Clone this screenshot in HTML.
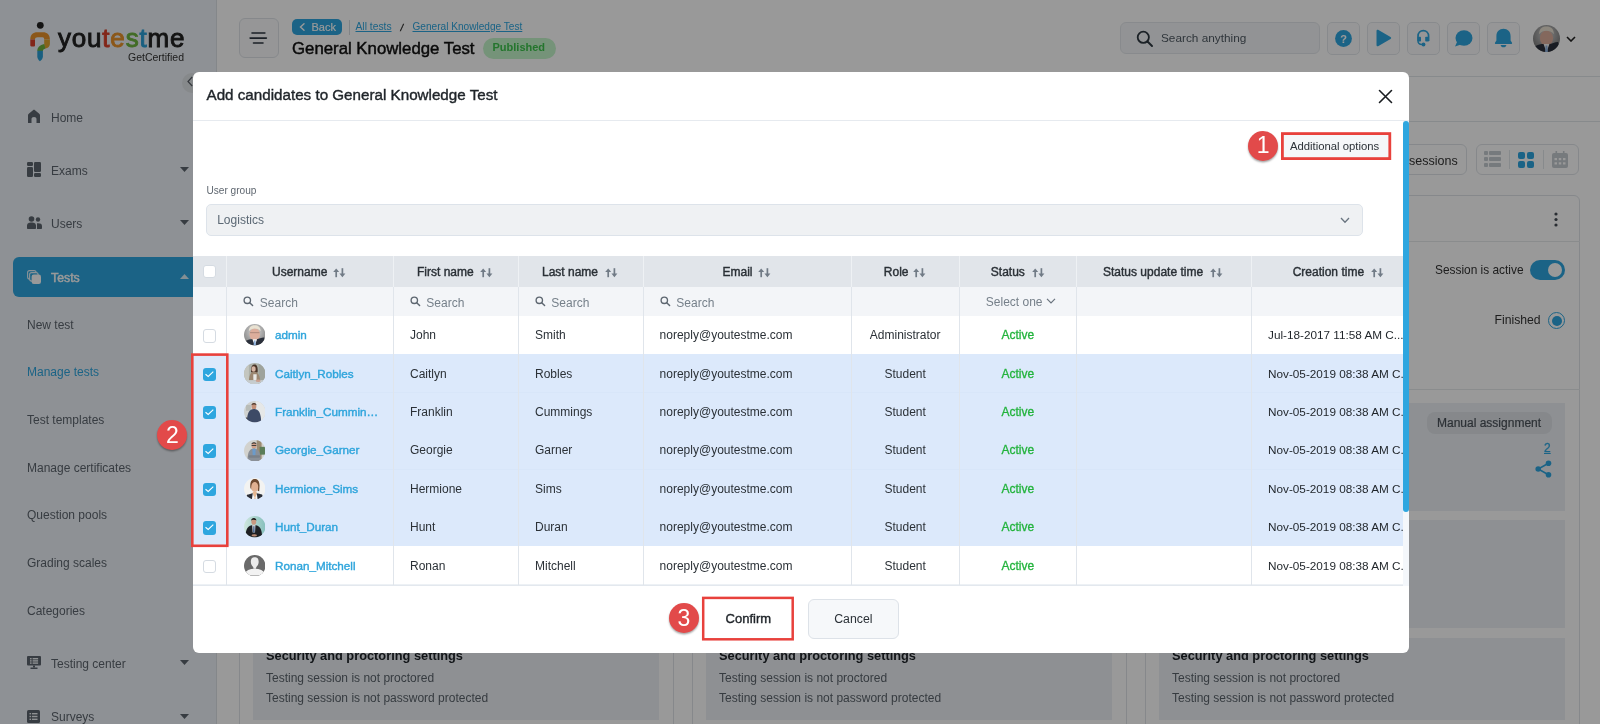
<!DOCTYPE html>
<html><head><meta charset="utf-8"><style>
*{box-sizing:border-box;margin:0;padding:0}
html,body{width:1600px;height:724px;overflow:hidden;background:#fff;font-family:"Liberation Sans", sans-serif;color:#222}
.t{position:absolute;white-space:nowrap}
.a{position:absolute}

#modal{position:absolute;left:192.5px;top:72px;width:1216.5px;height:580.5px;background:#fff;border-radius:6px;overflow:hidden}
#mi{position:absolute;left:-192.5px;top:-72px;width:1600px;height:724px}
.cb{position:absolute;width:13.5px;height:13.5px;border-radius:3px}
.cbu{border:1px solid #d5dbe2;background:#fff}
.cbc{background:#2ea6df}
.ell{overflow:hidden;text-overflow:ellipsis}
</style></head><body>
<div id="root" style="position:absolute;left:0;top:0;width:1600px;height:724px;will-change:transform">
<div class="a" style="left:0;top:0;width:217px;height:724px;background:#edf2f8;border-right:1px solid #dde2e7"></div>
<svg class="a" style="left:28px;top:20px" width="26" height="44" viewBox="0 0 26 44">
<circle cx="12.3" cy="5.3" r="3.4" fill="#222"/>
<path d="M2.3 19.5 C2.3 14.6 5.2 12.3 9.2 12.3 H15 C19 12.3 21.9 14.6 21.9 19.5 L16.2 19.5 C16.2 18 15.6 17.2 14.5 17.2 H9.6 C8 17.2 7 18 7 19.5 Z" fill="#e8922a"/>
<path d="M2.3 19.4 H7 V25.2 C7 26 6.5 26.5 5.6 26.5 H3.4 C2.8 26.5 2.3 26 2.3 25.3 Z" fill="#d9402b"/>
<path d="M16.2 19.4 H21.9 V23.8 C21.9 26.6 20.2 28 17.2 28.6 L16.2 28.7 Z" fill="#dfa52e"/>
<path d="M16.2 23.9 L17.4 28.6 C15.6 29.2 14.9 29.9 14.9 31 L9.3 31 C9.3 27.2 11.8 24.9 16.2 23.9 Z" fill="#6db33f"/>
<path d="M9.3 30.8 H14.9 V36.2 C14.9 38.4 13.6 40 11.9 41.2 C10.3 39.8 9.3 38.2 9.3 36.2 Z" fill="#2b9fd6"/>
</svg>
<div class="t" style="left:58px;top:23px;font-size:26px;line-height:30px;font-weight:400;-webkit-text-stroke:0.9px currentColor;letter-spacing:0.8px;color:#222">you<span style="color:#d9402b">t</span><span style="color:#e8922a">e</span><span style="color:#6db33f">s</span><span style="color:#2b9fd6">t</span>me</div>
<div class="t " style="left:128px;top:49.5px;font-size:10.5px;line-height:14px;color:#333;">GetCertified</div>
<div class="a" style="left:182px;top:72.5px;width:20px;height:20px;border-radius:10px;background:#e0e4e8"></div>
<svg class="a" style="left:186px;top:76px" width="8" height="11" viewBox="0 0 8 11"><path d="M6.2 1 L2 5.5 L6.2 10" stroke="#5a6068" stroke-width="1.2" fill="none"/></svg>
<svg class="a" style="left:27px;top:108.5px" width="14" height="15" viewBox="0 0 14 15"><path d="M1 14 V6.5 C1 5.5 1.5 5 2 4.5 L6 1.2 C6.6 0.7 7.4 0.7 8 1.2 L12 4.5 C12.5 5 13 5.5 13 6.5 V14 H9.5 V10 C9.5 8.8 8.5 8 7 8 C5.5 8 4.5 8.8 4.5 10 V14 Z" fill="#5d656e"/></svg>
<div class="t " style="left:51px;top:107.5px;font-size:12px;line-height:20px;color:#5d656e;">Home</div>
<svg class="a" style="left:27px;top:162px" width="14" height="15" viewBox="0 0 14 15"><rect x="0" y="0" width="6" height="4" rx="1.2" fill="#5d656e"/><rect x="0" y="5" width="6" height="10" rx="1.2" fill="#5d656e"/><rect x="7" y="0" width="7" height="10" rx="1.2" fill="#5d656e"/><rect x="7" y="11" width="7" height="4" rx="1.2" fill="#5d656e"/></svg>
<div class="t " style="left:51px;top:160.5px;font-size:12px;line-height:20px;color:#5d656e;">Exams</div>
<svg class="a" style="left:180px;top:167px" width="9" height="5" viewBox="0 0 9 5"><path d="M0 0 H9 L4.5 5 Z" fill="#5d656e"/></svg>
<svg class="a" style="left:27px;top:216px" width="15" height="13" viewBox="0 0 15 13"><circle cx="4.5" cy="3" r="2.8" fill="#5d656e"/><circle cx="11" cy="3.5" r="2.2" fill="#5d656e"/><path d="M0 10 C0 7 2 6.5 4.5 6.5 C7 6.5 9 7 9 10 V12 C9 12.6 8.6 13 8 13 H1 C0.4 13 0 12.6 0 12 Z" fill="#5d656e"/><path d="M10 7.2 C13 7 15 7.5 15 10 V12 C15 12.6 14.6 13 14 13 H10 Z" fill="#5d656e"/></svg>
<div class="t " style="left:51px;top:214.0px;font-size:12px;line-height:20px;color:#5d656e;">Users</div>
<svg class="a" style="left:180px;top:220px" width="9" height="5" viewBox="0 0 9 5"><path d="M0 0 H9 L4.5 5 Z" fill="#5d656e"/></svg>
<div class="a" style="left:13px;top:256.5px;width:230px;height:40.5px;border-radius:6px;background:#2ea6df"></div>
<svg class="a" style="left:26.5px;top:269.5px" width="15" height="15" viewBox="0 0 15 15"><rect x="0.6" y="0.6" width="8.5" height="8.5" rx="2" fill="#2ea6df" stroke="#e6f4fb" stroke-width="1.1"/><rect x="2.6" y="2.6" width="8.5" height="8.5" rx="2" fill="#2ea6df" stroke="#e6f4fb" stroke-width="1.1"/><rect x="4.6" y="4.6" width="9.4" height="9.4" rx="2.2" fill="#fff"/></svg>
<div class="t " style="left:51px;top:267.6px;font-size:12.3px;line-height:20px;color:#fff;-webkit-text-stroke:0.45px currentColor;">Tests</div>
<svg class="a" style="left:180px;top:274px" width="9" height="5" viewBox="0 0 9 5"><path d="M0 5 H9 L4.5 0 Z" fill="#dbeef7"/></svg>
<div class="t " style="left:27px;top:314.6px;font-size:12px;line-height:20px;color:#5d656e;">New test</div>
<div class="t " style="left:27px;top:362.1px;font-size:12px;line-height:20px;color:#2ea6df;">Manage tests</div>
<div class="t " style="left:27px;top:409.8px;font-size:12px;line-height:20px;color:#5d656e;">Test templates</div>
<div class="t " style="left:27px;top:457.6px;font-size:12px;line-height:20px;color:#5d656e;">Manage certificates</div>
<div class="t " style="left:27px;top:505.1px;font-size:12px;line-height:20px;color:#5d656e;">Question pools</div>
<div class="t " style="left:27px;top:552.6px;font-size:12px;line-height:20px;color:#5d656e;">Grading scales</div>
<div class="t " style="left:27px;top:600.6px;font-size:12px;line-height:20px;color:#5d656e;">Categories</div>
<svg class="a" style="left:27px;top:656px" width="14" height="13" viewBox="0 0 14 13"><rect x="0" y="0" width="14" height="9.5" rx="1" fill="#5d656e"/><rect x="3" y="2" width="1.6" height="1.4" fill="#eef2f6"/><rect x="3" y="4.2" width="1.6" height="1.4" fill="#eef2f6"/><rect x="3" y="6.4" width="1.6" height="1.4" fill="#eef2f6"/><rect x="5.6" y="2" width="5.5" height="1.4" fill="#eef2f6"/><rect x="5.6" y="4.2" width="5.5" height="1.4" fill="#eef2f6"/><rect x="5.6" y="6.4" width="5.5" height="1.4" fill="#eef2f6"/><rect x="6" y="9.5" width="2" height="2" fill="#5d656e"/><rect x="3.5" y="11.5" width="7" height="1.5" fill="#5d656e"/></svg>
<div class="t " style="left:51px;top:654.0px;font-size:12px;line-height:20px;color:#5d656e;">Testing center</div>
<svg class="a" style="left:180px;top:660px" width="9" height="5" viewBox="0 0 9 5"><path d="M0 0 H9 L4.5 5 Z" fill="#5d656e"/></svg>
<svg class="a" style="left:27px;top:710px" width="13" height="13" viewBox="0 0 13 13"><rect x="0" y="0" width="13" height="13" rx="1.5" fill="#5d656e"/><rect x="2.5" y="3" width="1.6" height="1.4" fill="#eef2f6"/><rect x="2.5" y="5.8" width="1.6" height="1.4" fill="#eef2f6"/><rect x="2.5" y="8.6" width="1.6" height="1.4" fill="#eef2f6"/><rect x="5" y="3" width="5.5" height="1.4" fill="#eef2f6"/><rect x="5" y="5.8" width="5.5" height="1.4" fill="#eef2f6"/><rect x="5" y="8.6" width="5.5" height="1.4" fill="#eef2f6"/></svg>
<div class="t " style="left:51px;top:706.5px;font-size:12px;line-height:20px;color:#5d656e;">Surveys</div>
<svg class="a" style="left:180px;top:714px" width="9" height="5" viewBox="0 0 9 5"><path d="M0 0 H9 L4.5 5 Z" fill="#5d656e"/></svg>
<div class="a" style="left:217px;top:76px;width:1383px;height:1px;background:#e2e6ea"></div>
<div class="a" style="left:217px;top:120.5px;width:1383px;height:1px;background:#e2e6ea"></div>
<div class="a" style="left:238.5px;top:18px;width:40px;height:40px;border:1px solid #dfe3e8;border-radius:6px;background:#fafbfc"></div>
<svg class="a" style="left:249px;top:31px" width="19" height="14" viewBox="0 0 19 14"><path d="M3 2 H15.9 M1.1 7.1 H17.4 M4.5 12 H14" stroke="#2d3640" stroke-width="1.6" stroke-linecap="round"/></svg>
<div class="a" style="left:292px;top:19px;width:50px;height:16px;border-radius:5px;background:#2ea6df"></div>
<svg class="a" style="left:298.5px;top:23px" width="6" height="8" viewBox="0 0 6 8"><path d="M5 0.8 L1.5 4 L5 7.2" stroke="#fff" stroke-width="1.4" fill="none" stroke-linecap="round"/></svg>
<div class="t " style="left:311.5px;top:19.8px;font-size:11px;line-height:14px;color:#fff;-webkit-text-stroke:0.15px currentColor;">Back</div>
<div class="a" style="left:348.5px;top:20px;width:1px;height:15px;background:#d5dae0"></div>
<div class="t " style="left:355.5px;top:19.5px;font-size:10.3px;line-height:14px;color:#2ea6df;"><u>All tests</u></div>
<div class="t " style="left:400.5px;top:20.5px;font-size:9.5px;line-height:14px;color:#222;font-style:italic;-webkit-text-stroke:0.3px currentColor;">/</div>
<div class="t " style="left:412.5px;top:19.5px;font-size:10.1px;line-height:14px;color:#2ea6df;"><u>General Knowledge Test</u></div>
<div class="t " style="left:292px;top:38.0px;font-size:16.8px;line-height:22px;color:#111;-webkit-text-stroke:0.45px currentColor;">General Knowledge Test</div>
<div class="a" style="left:483px;top:37.5px;width:73px;height:21px;border-radius:11px;background:#c4f5ca"></div>
<div class="t " style="left:492.5px;top:38.9px;font-size:11px;line-height:16px;color:#3cc44c;font-weight:700;">Published</div>
<div class="a" style="left:1120px;top:22px;width:200px;height:32px;border:1px solid #e3e7eb;border-radius:6px;background:#f4f6f8"></div>
<svg class="a" style="left:1136px;top:30px" width="18" height="18" viewBox="0 0 18 18"><circle cx="7.3" cy="7.3" r="5.6" stroke="#2d3740" stroke-width="1.8" fill="none"/><path d="M11.5 11.5 L16 16" stroke="#2d3740" stroke-width="2" stroke-linecap="round"/></svg>
<div class="t " style="left:1161px;top:29.0px;font-size:11.8px;line-height:18px;color:#4f5963;">Search anything</div>
<div class="a" style="left:1327px;top:22px;width:33px;height:33px;border:1px solid #e3e7eb;border-radius:5px;background:#fafbfc"></div>
<div class="a" style="left:1367px;top:22px;width:33px;height:33px;border:1px solid #e3e7eb;border-radius:5px;background:#fafbfc"></div>
<div class="a" style="left:1407px;top:22px;width:33px;height:33px;border:1px solid #e3e7eb;border-radius:5px;background:#fafbfc"></div>
<div class="a" style="left:1447px;top:22px;width:33px;height:33px;border:1px solid #e3e7eb;border-radius:5px;background:#fafbfc"></div>
<div class="a" style="left:1487px;top:22px;width:33px;height:33px;border:1px solid #e3e7eb;border-radius:5px;background:#fafbfc"></div>
<svg class="a" style="left:1335px;top:30px" width="17" height="17" viewBox="0 0 17 17"><circle cx="8.5" cy="8.5" r="8.4" fill="#2ea6df"/><text x="8.5" y="12.6" font-size="11" font-weight="700" text-anchor="middle" fill="#fff" font-family="Liberation Sans">?</text></svg>
<svg class="a" style="left:1375px;top:29px" width="17" height="18" viewBox="0 0 17 18"><path d="M1.5 2 C1.5 0.8 2.5 0.3 3.5 0.9 L15.5 8 C16.4 8.5 16.4 9.5 15.5 10 L3.5 17.1 C2.5 17.7 1.5 17.2 1.5 16 Z" fill="#2ea6df"/></svg>
<svg class="a" style="left:1416px;top:29px" width="15" height="18" viewBox="0 0 15 18"><path d="M2 12 V7.2 C2 3.6 4.4 1.6 7.3 1.6 C10.2 1.6 12.6 3.6 12.6 7.2 V12" stroke="#2ea6df" stroke-width="1.7" fill="none"/><rect x="1.6" y="7.8" width="3.4" height="4.8" rx="0.8" fill="#2ea6df"/><rect x="9.2" y="7.8" width="3.8" height="4.8" rx="0.8" fill="#2ea6df"/><path d="M2 12 C2 14.2 3.2 15.4 6 15.4" stroke="#2ea6df" stroke-width="1.5" fill="none"/><circle cx="7.5" cy="15.5" r="1.9" fill="#2ea6df"/></svg>
<svg class="a" style="left:1454px;top:30px" width="19" height="17" viewBox="0 0 19 17"><ellipse cx="10" cy="8" rx="8.5" ry="7.8" fill="#2ea6df"/><path d="M1 16.5 L3.5 11 L7 14.5 Z" fill="#2ea6df"/></svg>
<svg class="a" style="left:1494px;top:28px" width="19" height="20" viewBox="0 0 19 20"><path d="M9.5 0.8 C13.6 0.8 16.6 3.6 16.6 8.2 V12.6 L17.9 14.4 C18.4 15.2 18 16 17.1 16 H1.9 C1 16 0.6 15.2 1.1 14.4 L2.4 12.6 V8.2 C2.4 3.6 5.4 0.8 9.5 0.8 Z" fill="#2ea6df"/><path d="M6.6 16.9 H12.4 C12.2 18.4 11 19.3 9.5 19.3 C8 19.3 6.8 18.4 6.6 16.9 Z" fill="#2ea6df"/></svg>
<svg class="a" style="left:1533px;top:25px" width="27" height="27" viewBox="0 0 22 22"><defs><clipPath id="hc"><circle cx="11" cy="11" r="11"/></clipPath><radialGradient id="hg" cx="0.5" cy="0.35" r="0.7"><stop offset="0" stop-color="#d8d8d8"/><stop offset="1" stop-color="#6c6c6c"/></radialGradient></defs><g clip-path="url(#hc)"><rect width="22" height="22" fill="url(#hg)"/><ellipse cx="11" cy="10.6" rx="5.4" ry="6.2" fill="#dcae9c"/><path d="M5 7.5 C5 2.5 8 1.2 11 1.2 C14.5 1.2 17 3 17 7.5 C15.5 5.2 13 4.6 11 4.6 C8.5 4.6 6.5 5.5 5 7.5 Z" fill="#e9e2d2"/><path d="M0 22 L1.5 17.5 C4 15.8 6.5 15.5 9 15.5 L11 21 L13 15.5 C15.5 15.2 18.5 13.5 20.5 13.8 L22 22 Z" fill="#2b303b"/><path d="M8.6 15.5 L11 22 L13.4 15.5 Z" fill="#f2f2f2"/><path d="M10.3 16.8 L11.7 16.8 L12.2 22 L9.8 22 Z" fill="#8fb3e0"/></g></svg>
<svg class="a" style="left:1566px;top:36px" width="10" height="6" viewBox="0 0 10 6"><path d="M1 1 L5 5 L9 1" stroke="#222" stroke-width="1.6" fill="none"/></svg>
<div class="a" style="left:1400px;top:144px;width:67px;height:31px;border:1px solid #dfe3e8;border-radius:6px;background:#fff"></div>
<div class="t " style="left:1409px;top:151.8px;font-size:12.5px;line-height:18px;color:#333;">sessions</div>
<div class="a" style="left:1476px;top:144px;width:103px;height:31px;border:1px solid #dfe3e8;border-radius:6px;background:#fff"></div>
<div class="a" style="left:1509px;top:150px;width:1px;height:19px;background:#e2e6ea"></div>
<div class="a" style="left:1543px;top:150px;width:1px;height:19px;background:#e2e6ea"></div>
<svg class="a" style="left:1484px;top:151px" width="17" height="16" viewBox="0 0 17 16"><rect x="0" y="0" width="4" height="4" rx="1" fill="#c5cbd1"/><rect x="5" y="0" width="12" height="4" rx="1" fill="#c5cbd1"/><rect x="0" y="6" width="4" height="4" rx="1" fill="#c5cbd1"/><rect x="5" y="6" width="12" height="4" rx="1" fill="#c5cbd1"/><rect x="0" y="12" width="4" height="4" rx="1" fill="#c5cbd1"/><rect x="5" y="12" width="12" height="4" rx="1" fill="#c5cbd1"/></svg>
<svg class="a" style="left:1518px;top:152px" width="16" height="16" viewBox="0 0 16 16"><rect x="0" y="0" width="7" height="7" rx="2" fill="#2ea6df"/><rect x="9" y="0" width="7" height="7" rx="2" fill="#2ea6df"/><rect x="0" y="9" width="7" height="7" rx="2" fill="#2ea6df"/><rect x="9" y="9" width="7" height="7" rx="2" fill="#2ea6df"/></svg>
<svg class="a" style="left:1552px;top:151px" width="16" height="17" viewBox="0 0 16 17"><rect x="0" y="2" width="16" height="15" rx="2" fill="#c5cbd1"/><rect x="3.5" y="0" width="1.6" height="4" fill="#c5cbd1"/><rect x="10.9" y="0" width="1.6" height="4" fill="#c5cbd1"/><g fill="#fff"><rect x="2.5" y="7" width="2.5" height="2.2"/><rect x="6.75" y="7" width="2.5" height="2.2"/><rect x="11" y="7" width="2.5" height="2.2"/><rect x="2.5" y="11.3" width="2.5" height="2.2"/><rect x="6.75" y="11.3" width="2.5" height="2.2"/><rect x="11" y="11.3" width="2.5" height="2.2"/></g></svg>
<div class="a" style="left:239px;top:195px;width:435px;height:600px;border:1px solid #dfe3e8;border-radius:6px;background:#fff"></div>
<div class="a" style="left:239px;top:241px;width:435px;height:1px;background:#e6e9ec"></div>
<div class="a" style="left:239px;top:388.5px;width:435px;height:1px;background:#e6e9ec"></div>
<div class="a" style="left:692px;top:195px;width:435px;height:600px;border:1px solid #dfe3e8;border-radius:6px;background:#fff"></div>
<div class="a" style="left:692px;top:241px;width:435px;height:1px;background:#e6e9ec"></div>
<div class="a" style="left:692px;top:388.5px;width:435px;height:1px;background:#e6e9ec"></div>
<div class="a" style="left:1145px;top:195px;width:435px;height:600px;border:1px solid #dfe3e8;border-radius:6px;background:#fff"></div>
<div class="a" style="left:1145px;top:241px;width:435px;height:1px;background:#e6e9ec"></div>
<div class="a" style="left:1145px;top:388.5px;width:435px;height:1px;background:#e6e9ec"></div>
<svg class="a" style="left:1553px;top:212px" width="6" height="15" viewBox="0 0 6 15"><circle cx="3" cy="2" r="1.6" fill="#454c54"/><circle cx="3" cy="7.5" r="1.6" fill="#454c54"/><circle cx="3" cy="13" r="1.6" fill="#454c54"/></svg>
<div class="t " style="left:1435px;top:260.5px;font-size:11.9px;line-height:18px;color:#333;">Session is active</div>
<div class="a" style="left:1530px;top:260px;width:35px;height:20px;border-radius:10px;background:#2ea6df"></div>
<div class="a" style="left:1548px;top:263px;width:14px;height:14px;border-radius:7px;background:#fff"></div>
<div class="t " style="left:1494.5px;top:311.0px;font-size:12.2px;line-height:18px;color:#333;">Finished</div>
<div class="a" style="left:1548px;top:312px;width:17px;height:17px;border-radius:9px;border:1.6px solid #2ea6df;background:#fff"></div>
<div class="a" style="left:1551.5px;top:315.5px;width:10px;height:10px;border-radius:5px;background:#2ea6df"></div>
<div class="a" style="left:253px;top:403px;width:406px;height:108px;background:#edf1f6"></div>
<div class="a" style="left:253px;top:520px;width:406px;height:108px;background:#edf1f6"></div>
<div class="a" style="left:253px;top:638px;width:406px;height:82px;background:#edf1f6"></div>
<div class="t " style="left:266px;top:646.0px;font-size:12.8px;line-height:20px;color:#1e2328;font-weight:700;">Security and proctoring settings</div>
<div class="t " style="left:266px;top:668.0px;font-size:12px;line-height:20px;color:#5b636b;">Testing session is not proctored</div>
<div class="t " style="left:266px;top:688.0px;font-size:12px;line-height:20px;color:#5b636b;">Testing session is not password protected</div>
<div class="a" style="left:706px;top:403px;width:406px;height:108px;background:#edf1f6"></div>
<div class="a" style="left:706px;top:520px;width:406px;height:108px;background:#edf1f6"></div>
<div class="a" style="left:706px;top:638px;width:406px;height:82px;background:#edf1f6"></div>
<div class="t " style="left:719px;top:646.0px;font-size:12.8px;line-height:20px;color:#1e2328;font-weight:700;">Security and proctoring settings</div>
<div class="t " style="left:719px;top:668.0px;font-size:12px;line-height:20px;color:#5b636b;">Testing session is not proctored</div>
<div class="t " style="left:719px;top:688.0px;font-size:12px;line-height:20px;color:#5b636b;">Testing session is not password protected</div>
<div class="a" style="left:1159px;top:403px;width:406px;height:108px;background:#edf1f6"></div>
<div class="a" style="left:1159px;top:520px;width:406px;height:108px;background:#edf1f6"></div>
<div class="a" style="left:1159px;top:638px;width:406px;height:82px;background:#edf1f6"></div>
<div class="t " style="left:1172px;top:646.0px;font-size:12.8px;line-height:20px;color:#1e2328;font-weight:700;">Security and proctoring settings</div>
<div class="t " style="left:1172px;top:668.0px;font-size:12px;line-height:20px;color:#5b636b;">Testing session is not proctored</div>
<div class="t " style="left:1172px;top:688.0px;font-size:12px;line-height:20px;color:#5b636b;">Testing session is not password protected</div>
<div class="a" style="left:1427px;top:412px;width:125px;height:22px;border-radius:8px;background:#dfe3e8"></div>
<div class="t " style="left:1437px;top:413.0px;font-size:12px;line-height:20px;color:#4a5159;-webkit-text-stroke:0.2px currentColor;">Manual assignment</div>
<div class="t " style="left:1544px;top:438.0px;font-size:12px;line-height:20px;color:#2ea6df;-webkit-text-stroke:0.3px currentColor;"><u>2</u></div>
<svg class="a" style="left:1535px;top:460px" width="17" height="18" viewBox="0 0 17 18"><circle cx="13.5" cy="3.2" r="2.8" fill="#2ea6df"/><circle cx="3.2" cy="9" r="2.8" fill="#2ea6df"/><circle cx="13.5" cy="14.8" r="2.8" fill="#2ea6df"/><path d="M13.5 3.2 L3.2 9 L13.5 14.8" stroke="#2ea6df" stroke-width="1.6" fill="none"/></svg>
<div class="a" style="left:0;top:0;width:1600px;height:724px;background:rgba(0,0,0,0.4)"></div>
<div id="modal"><div id="mi">
<div class="t " style="left:206.5px;top:84.2px;font-size:15.2px;line-height:22px;color:#1f2429;-webkit-text-stroke:0.4px currentColor;">Add candidates to General Knowledge Test</div>
<div class="a" style="left:193px;top:120px;width:1216px;height:1px;background:#e6eaef"></div>
<svg class="a" style="left:1378px;top:89px" width="15" height="15" viewBox="0 0 15 15"><path d="M1.5 1.5 L13.5 13.5 M13.5 1.5 L1.5 13.5" stroke="#1a1d21" stroke-width="1.6" stroke-linecap="round"/></svg>
<div class="a" style="left:1282px;top:133px;width:108px;height:26px;background:#f5f7f9;border:1px solid #dde2e8;border-radius:4px"></div>
<div class="t " style="left:1290px;top:138.3px;font-size:11.3px;line-height:16px;color:#2c3238;">Additional options</div>
<div class="t " style="left:206.5px;top:184.2px;font-size:10.1px;line-height:14px;color:#5f6770;">User group</div>
<div class="a" style="left:206px;top:204px;width:1156.5px;height:32px;background:#eff1f3;border:1px solid #dde3ea;border-radius:5px"></div>
<div class="t " style="left:217.2px;top:211.4px;font-size:12px;line-height:18px;color:#5b6874;">Logistics</div>
<svg class="a" style="left:1340px;top:216.5px" width="10" height="7" viewBox="0 0 10 7"><path d="M1 1 L5 5.3 L9 1" stroke="#6a7580" stroke-width="1.3" fill="none"/></svg>
<div class="a" style="left:193px;top:256px;width:1210px;height:30.5px;background:#e1e5ea"></div>
<div class="a" style="left:193px;top:286.5px;width:1210px;height:29.5px;background:#f3f5f8"></div>
<div class="t " style="left:272px;top:262.9px;font-size:12px;line-height:18px;color:#2a3036;-webkit-text-stroke:0.4px currentColor;">Username</div>
<svg class="a" style="left:332.8px;top:267.7px" width="13" height="10" viewBox="0 0 13 10"><path d="M3.2 9.2 V3" stroke="#717b86" stroke-width="1.7"/><path d="M0.2 4 L3.2 0.4 L6.2 4 Z" fill="#717b86"/><path d="M9.4 0.2 V6.4" stroke="#717b86" stroke-width="1.7"/><path d="M6.4 5.6 L9.4 9.2 L12.4 5.6 Z" fill="#717b86"/></svg>
<div class="t " style="left:417px;top:262.9px;font-size:12px;line-height:18px;color:#2a3036;-webkit-text-stroke:0.4px currentColor;">First name</div>
<svg class="a" style="left:480px;top:267.7px" width="13" height="10" viewBox="0 0 13 10"><path d="M3.2 9.2 V3" stroke="#717b86" stroke-width="1.7"/><path d="M0.2 4 L3.2 0.4 L6.2 4 Z" fill="#717b86"/><path d="M9.4 0.2 V6.4" stroke="#717b86" stroke-width="1.7"/><path d="M6.4 5.6 L9.4 9.2 L12.4 5.6 Z" fill="#717b86"/></svg>
<div class="t " style="left:542px;top:262.9px;font-size:12px;line-height:18px;color:#2a3036;-webkit-text-stroke:0.4px currentColor;">Last name</div>
<svg class="a" style="left:604.5px;top:267.7px" width="13" height="10" viewBox="0 0 13 10"><path d="M3.2 9.2 V3" stroke="#717b86" stroke-width="1.7"/><path d="M0.2 4 L3.2 0.4 L6.2 4 Z" fill="#717b86"/><path d="M9.4 0.2 V6.4" stroke="#717b86" stroke-width="1.7"/><path d="M6.4 5.6 L9.4 9.2 L12.4 5.6 Z" fill="#717b86"/></svg>
<div class="t " style="left:722.5px;top:262.9px;font-size:12px;line-height:18px;color:#2a3036;-webkit-text-stroke:0.4px currentColor;">Email</div>
<svg class="a" style="left:758px;top:267.7px" width="13" height="10" viewBox="0 0 13 10"><path d="M3.2 9.2 V3" stroke="#717b86" stroke-width="1.7"/><path d="M0.2 4 L3.2 0.4 L6.2 4 Z" fill="#717b86"/><path d="M9.4 0.2 V6.4" stroke="#717b86" stroke-width="1.7"/><path d="M6.4 5.6 L9.4 9.2 L12.4 5.6 Z" fill="#717b86"/></svg>
<div class="t " style="left:883.8px;top:262.9px;font-size:12px;line-height:18px;color:#2a3036;-webkit-text-stroke:0.4px currentColor;">Role</div>
<svg class="a" style="left:913.3px;top:267.7px" width="13" height="10" viewBox="0 0 13 10"><path d="M3.2 9.2 V3" stroke="#717b86" stroke-width="1.7"/><path d="M0.2 4 L3.2 0.4 L6.2 4 Z" fill="#717b86"/><path d="M9.4 0.2 V6.4" stroke="#717b86" stroke-width="1.7"/><path d="M6.4 5.6 L9.4 9.2 L12.4 5.6 Z" fill="#717b86"/></svg>
<div class="t " style="left:990.8px;top:262.9px;font-size:12px;line-height:18px;color:#2a3036;-webkit-text-stroke:0.4px currentColor;">Status</div>
<svg class="a" style="left:1031.5px;top:267.7px" width="13" height="10" viewBox="0 0 13 10"><path d="M3.2 9.2 V3" stroke="#717b86" stroke-width="1.7"/><path d="M0.2 4 L3.2 0.4 L6.2 4 Z" fill="#717b86"/><path d="M9.4 0.2 V6.4" stroke="#717b86" stroke-width="1.7"/><path d="M6.4 5.6 L9.4 9.2 L12.4 5.6 Z" fill="#717b86"/></svg>
<div class="t " style="left:1103px;top:262.9px;font-size:12px;line-height:18px;color:#2a3036;-webkit-text-stroke:0.4px currentColor;">Status update time</div>
<svg class="a" style="left:1210px;top:267.7px" width="13" height="10" viewBox="0 0 13 10"><path d="M3.2 9.2 V3" stroke="#717b86" stroke-width="1.7"/><path d="M0.2 4 L3.2 0.4 L6.2 4 Z" fill="#717b86"/><path d="M9.4 0.2 V6.4" stroke="#717b86" stroke-width="1.7"/><path d="M6.4 5.6 L9.4 9.2 L12.4 5.6 Z" fill="#717b86"/></svg>
<div class="t " style="left:1292.7px;top:262.9px;font-size:12px;line-height:18px;color:#2a3036;-webkit-text-stroke:0.4px currentColor;">Creation time</div>
<svg class="a" style="left:1370.6px;top:267.7px" width="13" height="10" viewBox="0 0 13 10"><path d="M3.2 9.2 V3" stroke="#717b86" stroke-width="1.7"/><path d="M0.2 4 L3.2 0.4 L6.2 4 Z" fill="#717b86"/><path d="M9.4 0.2 V6.4" stroke="#717b86" stroke-width="1.7"/><path d="M6.4 5.6 L9.4 9.2 L12.4 5.6 Z" fill="#717b86"/></svg>
<div class="cb cbu" style="left:202.8px;top:264.6px"></div>
<svg class="a" style="left:243.1px;top:295.6px" width="11" height="11" viewBox="0 0 11 11"><circle cx="4.3" cy="4.3" r="3.2" stroke="#5d6670" stroke-width="1.35" fill="none"/><path d="M6.7 6.7 L9.6 9.6" stroke="#5d6670" stroke-width="1.45" stroke-linecap="round"/></svg>
<div class="t " style="left:259.8px;top:294.0px;font-size:12px;line-height:18px;color:#76808a;">Search</div>
<svg class="a" style="left:409.6px;top:295.6px" width="11" height="11" viewBox="0 0 11 11"><circle cx="4.3" cy="4.3" r="3.2" stroke="#5d6670" stroke-width="1.35" fill="none"/><path d="M6.7 6.7 L9.6 9.6" stroke="#5d6670" stroke-width="1.45" stroke-linecap="round"/></svg>
<div class="t " style="left:426.3px;top:294.0px;font-size:12px;line-height:18px;color:#76808a;">Search</div>
<svg class="a" style="left:534.6px;top:295.6px" width="11" height="11" viewBox="0 0 11 11"><circle cx="4.3" cy="4.3" r="3.2" stroke="#5d6670" stroke-width="1.35" fill="none"/><path d="M6.7 6.7 L9.6 9.6" stroke="#5d6670" stroke-width="1.45" stroke-linecap="round"/></svg>
<div class="t " style="left:551.3px;top:294.0px;font-size:12px;line-height:18px;color:#76808a;">Search</div>
<svg class="a" style="left:659.6px;top:295.6px" width="11" height="11" viewBox="0 0 11 11"><circle cx="4.3" cy="4.3" r="3.2" stroke="#5d6670" stroke-width="1.35" fill="none"/><path d="M6.7 6.7 L9.6 9.6" stroke="#5d6670" stroke-width="1.45" stroke-linecap="round"/></svg>
<div class="t " style="left:676.3px;top:294.0px;font-size:12px;line-height:18px;color:#76808a;">Search</div>
<div class="t " style="left:985.8px;top:292.6px;font-size:12px;line-height:18px;color:#76808a;">Select one</div>
<svg class="a" style="left:1046px;top:298px" width="10" height="6" viewBox="0 0 10 6"><path d="M1 0.8 L5 4.8 L9 0.8" stroke="#69737d" stroke-width="1.2" fill="none"/></svg>
<div class="a" style="left:193px;top:316.0px;width:1210px;height:38.4px;background:#fff"></div>
<div class="a" style="left:193px;top:353.9px;width:1210px;height:1px;background:#edf1f5"></div>
<div class="cb cbu" style="left:202.6px;top:329.1px"></div>
<svg class="a" style="left:243.6px;top:324.3px" width="21.5" height="21.5" viewBox="0 0 22 22"><defs><clipPath id="avadmin"><circle cx="11" cy="11" r="11"/></clipPath></defs><g clip-path="url(#avadmin)"><radialGradient id="gavadmin" cx="0.5" cy="0.35" r="0.7"><stop offset="0" stop-color="#d8d8d8"/><stop offset="1" stop-color="#7c7c7c"/></radialGradient><rect width="22" height="22" fill="url(#gavadmin)"/><ellipse cx="11" cy="10.6" rx="5.4" ry="6.2" fill="#dcae9c"/><path d="M5 7.5 C5 2.5 8 1.2 11 1.2 C14.5 1.2 17 3 17 7.5 C15.5 5.2 13 4.6 11 4.6 C8.5 4.6 6.5 5.5 5 7.5 Z" fill="#e9e2d2"/><rect x="6.2" y="8.2" width="9.6" height="1.2" fill="#9a7a70" opacity="0.6"/><path d="M0 22 L1.5 17.5 C4 15.8 6.5 15.5 9 15.5 L11 21 L13 15.5 C15.5 15.2 18.5 13.5 20.5 13.8 L22 22 Z" fill="#2b303b"/><path d="M8.6 15.5 L11 22 L13.4 15.5 Z" fill="#f2f2f2"/><path d="M10.3 16.8 L11.7 16.8 L12.2 22 L9.8 22 Z" fill="#8fb3e0"/></g></svg>
<div class="t" style="left:275px;top:325.2px;font-size:11.7px;line-height:20px;color:#2fa5dc;-webkit-text-stroke:0.4px currentColor">admin</div>
<div class="t " style="left:410px;top:325.2px;font-size:12px;line-height:20px;color:#2b3137;">John</div>
<div class="t " style="left:535px;top:325.2px;font-size:12px;line-height:20px;color:#2b3137;">Smith</div>
<div class="t " style="left:659.6px;top:325.2px;font-size:12px;line-height:20px;color:#2b3137;">noreply@youtestme.com</div>
<div class="t" style="left:852.2px;width:106px;text-align:center;top:325.2px;font-size:12px;line-height:20px;color:#2b3137;">Administrator</div>
<div class="t" style="left:962.8px;width:110px;text-align:center;top:325.2px;font-size:12px;line-height:20px;color:#22b33c;-webkit-text-stroke:0.3px currentColor;">Active</div>
<div class="t" style="left:1268px;top:325.2px;width:135px;overflow:hidden;font-size:11.75px;line-height:20px;color:#1f2429">Jul-18-2017 11:58 AM C...</div>
<div class="a" style="left:193px;top:354.4px;width:1210px;height:38.4px;background:#dce9fb"></div>
<div class="a" style="left:193px;top:392.3px;width:1210px;height:1px;background:#d8e6f9"></div>
<div class="cb cbc" style="left:202.6px;top:367.5px"></div>
<svg class="a" style="left:205px;top:369.7px" width="9" height="8" viewBox="0 0 9 8"><path d="M0.5 4.2 L3.2 6.4 L8.3 1.6" stroke="#fff" stroke-width="1.1" fill="none"/></svg>
<svg class="a" style="left:243.6px;top:362.7px" width="21.5" height="21.5" viewBox="0 0 22 22"><defs><clipPath id="avcaitlyn"><circle cx="11" cy="11" r="11"/></clipPath></defs><g clip-path="url(#avcaitlyn)"><rect width="22" height="22" fill="#aeb2aa"/><rect x="0" y="0" width="5" height="22" fill="#c4c6bf"/><rect x="15" y="0" width="7" height="22" fill="#9ea39c"/><path d="M7.2 8.5 C6.8 3 9 1.5 10.8 1.5 C13 1.5 14.2 3.5 14 9 L13.5 10 L8 10 Z" fill="#4a3428"/><ellipse cx="9.8" cy="6.2" rx="2.2" ry="2.8" fill="#d6b4a2"/><path d="M5 18.5 C5.5 11 7.5 9 10.5 9 C13.5 9 16 11 16.5 18.5 Z" fill="#9b8670"/><path d="M9.5 11.5 L13 11.5 L12.8 17.5 L9.6 17.5 Z" fill="#e8e8e6"/><rect x="0" y="17.5" width="22" height="5" fill="#c6ccce"/><ellipse cx="14.5" cy="18.2" rx="2.5" ry="1.2" fill="#c9a090"/></g></svg>
<div class="t" style="left:275px;top:363.6px;font-size:11.7px;line-height:20px;color:#2fa5dc;-webkit-text-stroke:0.4px currentColor">Caitlyn_Robles</div>
<div class="t " style="left:410px;top:363.6px;font-size:12px;line-height:20px;color:#2b3137;">Caitlyn</div>
<div class="t " style="left:535px;top:363.6px;font-size:12px;line-height:20px;color:#2b3137;">Robles</div>
<div class="t " style="left:659.6px;top:363.6px;font-size:12px;line-height:20px;color:#2b3137;">noreply@youtestme.com</div>
<div class="t" style="left:852.2px;width:106px;text-align:center;top:363.6px;font-size:12px;line-height:20px;color:#2b3137;">Student</div>
<div class="t" style="left:962.8px;width:110px;text-align:center;top:363.6px;font-size:12px;line-height:20px;color:#22b33c;-webkit-text-stroke:0.3px currentColor;">Active</div>
<div class="t" style="left:1268px;top:363.6px;width:135px;overflow:hidden;font-size:11.75px;line-height:20px;color:#1f2429">Nov-05-2019 08:38 AM C..</div>
<div class="a" style="left:193px;top:392.8px;width:1210px;height:38.4px;background:#dce9fb"></div>
<div class="a" style="left:193px;top:430.7px;width:1210px;height:1px;background:#d8e6f9"></div>
<div class="cb cbc" style="left:202.6px;top:405.9px"></div>
<svg class="a" style="left:205px;top:408.1px" width="9" height="8" viewBox="0 0 9 8"><path d="M0.5 4.2 L3.2 6.4 L8.3 1.6" stroke="#fff" stroke-width="1.1" fill="none"/></svg>
<svg class="a" style="left:243.6px;top:401.1px" width="21.5" height="21.5" viewBox="0 0 22 22"><defs><clipPath id="avfranklin"><circle cx="11" cy="11" r="11"/></clipPath></defs><g clip-path="url(#avfranklin)"><rect width="22" height="22" fill="#d0d2d0"/><rect x="12" y="0" width="10" height="22" fill="#e6e8e8"/><rect x="2" y="4" width="5" height="6" fill="#b8bcb8"/><ellipse cx="10.2" cy="5.6" rx="2.4" ry="3" fill="#c39078"/><path d="M7.6 4.5 C7.6 1.2 12.8 1.2 12.8 4.5 C12 3.2 8.5 3.2 7.6 4.5 Z" fill="#4b3426"/><path d="M3 22 C3 12 5.5 8.2 10.2 8.2 C15 8.2 17.5 12 17.5 22 Z" fill="#3d4a66"/><rect x="1.5" y="17" width="1.8" height="2" fill="#111"/></g></svg>
<div class="t" style="left:275px;top:402.0px;font-size:11.7px;line-height:20px;color:#2fa5dc;-webkit-text-stroke:0.4px currentColor">Franklin_Cummin…</div>
<div class="t " style="left:410px;top:402.0px;font-size:12px;line-height:20px;color:#2b3137;">Franklin</div>
<div class="t " style="left:535px;top:402.0px;font-size:12px;line-height:20px;color:#2b3137;">Cummings</div>
<div class="t " style="left:659.6px;top:402.0px;font-size:12px;line-height:20px;color:#2b3137;">noreply@youtestme.com</div>
<div class="t" style="left:852.2px;width:106px;text-align:center;top:402.0px;font-size:12px;line-height:20px;color:#2b3137;">Student</div>
<div class="t" style="left:962.8px;width:110px;text-align:center;top:402.0px;font-size:12px;line-height:20px;color:#22b33c;-webkit-text-stroke:0.3px currentColor;">Active</div>
<div class="t" style="left:1268px;top:402.0px;width:135px;overflow:hidden;font-size:11.75px;line-height:20px;color:#1f2429">Nov-05-2019 08:38 AM C..</div>
<div class="a" style="left:193px;top:431.2px;width:1210px;height:38.4px;background:#dce9fb"></div>
<div class="a" style="left:193px;top:469.1px;width:1210px;height:1px;background:#d8e6f9"></div>
<div class="cb cbc" style="left:202.6px;top:444.3px"></div>
<svg class="a" style="left:205px;top:446.5px" width="9" height="8" viewBox="0 0 9 8"><path d="M0.5 4.2 L3.2 6.4 L8.3 1.6" stroke="#fff" stroke-width="1.1" fill="none"/></svg>
<svg class="a" style="left:243.6px;top:439.5px" width="21.5" height="21.5" viewBox="0 0 22 22"><defs><clipPath id="avgeorgie"><circle cx="11" cy="11" r="11"/></clipPath></defs><g clip-path="url(#avgeorgie)"><rect width="22" height="22" fill="#d2d2ce"/><rect x="13" y="0" width="5" height="22" fill="#9c8b72"/><rect x="16" y="7" width="6" height="8" fill="#5b7d58"/><ellipse cx="10.2" cy="5.8" rx="2.5" ry="3.1" fill="#cf9f88"/><path d="M7.6 4.6 C7.6 1.4 12.8 1.4 12.8 4.6 C12 3.4 8.5 3.4 7.6 4.6 Z" fill="#2e2a26"/><rect x="7.8" y="5.2" width="4.8" height="0.9" fill="#333"/><path d="M3.5 22 C3.5 12 6 8.8 10.2 8.8 C14.5 8.8 17 12 17 22 Z" fill="#8a9098"/><path d="M8.5 8.9 L12 8.9 L11.6 16 L8.9 16 Z" fill="#6b9bcb"/><rect x="4.5" y="15.5" width="12" height="2.6" rx="1.2" fill="#7a8088"/></g></svg>
<div class="t" style="left:275px;top:440.4px;font-size:11.7px;line-height:20px;color:#2fa5dc;-webkit-text-stroke:0.4px currentColor">Georgie_Garner</div>
<div class="t " style="left:410px;top:440.4px;font-size:12px;line-height:20px;color:#2b3137;">Georgie</div>
<div class="t " style="left:535px;top:440.4px;font-size:12px;line-height:20px;color:#2b3137;">Garner</div>
<div class="t " style="left:659.6px;top:440.4px;font-size:12px;line-height:20px;color:#2b3137;">noreply@youtestme.com</div>
<div class="t" style="left:852.2px;width:106px;text-align:center;top:440.4px;font-size:12px;line-height:20px;color:#2b3137;">Student</div>
<div class="t" style="left:962.8px;width:110px;text-align:center;top:440.4px;font-size:12px;line-height:20px;color:#22b33c;-webkit-text-stroke:0.3px currentColor;">Active</div>
<div class="t" style="left:1268px;top:440.4px;width:135px;overflow:hidden;font-size:11.75px;line-height:20px;color:#1f2429">Nov-05-2019 08:38 AM C..</div>
<div class="a" style="left:193px;top:469.6px;width:1210px;height:38.4px;background:#dce9fb"></div>
<div class="a" style="left:193px;top:507.5px;width:1210px;height:1px;background:#d8e6f9"></div>
<div class="cb cbc" style="left:202.6px;top:482.7px"></div>
<svg class="a" style="left:205px;top:484.9px" width="9" height="8" viewBox="0 0 9 8"><path d="M0.5 4.2 L3.2 6.4 L8.3 1.6" stroke="#fff" stroke-width="1.1" fill="none"/></svg>
<svg class="a" style="left:243.6px;top:477.9px" width="21.5" height="21.5" viewBox="0 0 22 22"><defs><clipPath id="avhermione"><circle cx="11" cy="11" r="11"/></clipPath></defs><g clip-path="url(#avhermione)"><rect width="22" height="22" fill="#f3f3f1"/><path d="M6.5 10 C5.8 3 8.5 1 11 1 C14 1 16.5 3 15.8 10 L15.5 13.5 L14 13 L14 9 L8 9 L7.5 12 Z" fill="#6e4a30"/><ellipse cx="11" cy="9.2" rx="3.6" ry="5" fill="#e0b090"/><path d="M7.5 5.5 C8.5 3.5 13.5 3.5 14.5 5.5 L14.5 4 C13 2 9 2 7.5 4 Z" fill="#6e4a30"/><path d="M9 14 L13 14 L13.5 22 L8.5 22 Z" fill="#e8b890"/><path d="M1.5 22 L3 17.2 C5 16.5 7.5 16 9 15.5 L10.5 22 Z" fill="#2b2e36"/><path d="M20.5 22 L18.5 16.8 C17 16.3 14.5 15.8 13 15.5 L12 22 Z" fill="#2b2e36"/><path d="M9 15.5 L11 20.5 L9.8 22 L8 22 Z" fill="#f5f5f5"/><path d="M13 15.5 L11.5 20.5 L12.2 22 L14 22 Z" fill="#f5f5f5"/></g></svg>
<div class="t" style="left:275px;top:478.8px;font-size:11.7px;line-height:20px;color:#2fa5dc;-webkit-text-stroke:0.4px currentColor">Hermione_Sims</div>
<div class="t " style="left:410px;top:478.8px;font-size:12px;line-height:20px;color:#2b3137;">Hermione</div>
<div class="t " style="left:535px;top:478.8px;font-size:12px;line-height:20px;color:#2b3137;">Sims</div>
<div class="t " style="left:659.6px;top:478.8px;font-size:12px;line-height:20px;color:#2b3137;">noreply@youtestme.com</div>
<div class="t" style="left:852.2px;width:106px;text-align:center;top:478.8px;font-size:12px;line-height:20px;color:#2b3137;">Student</div>
<div class="t" style="left:962.8px;width:110px;text-align:center;top:478.8px;font-size:12px;line-height:20px;color:#22b33c;-webkit-text-stroke:0.3px currentColor;">Active</div>
<div class="t" style="left:1268px;top:478.8px;width:135px;overflow:hidden;font-size:11.75px;line-height:20px;color:#1f2429">Nov-05-2019 08:38 AM C..</div>
<div class="a" style="left:193px;top:508.0px;width:1210px;height:38.4px;background:#dce9fb"></div>
<div class="a" style="left:193px;top:545.9px;width:1210px;height:1px;background:#d8e6f9"></div>
<div class="cb cbc" style="left:202.6px;top:521.1px"></div>
<svg class="a" style="left:205px;top:523.3px" width="9" height="8" viewBox="0 0 9 8"><path d="M0.5 4.2 L3.2 6.4 L8.3 1.6" stroke="#fff" stroke-width="1.1" fill="none"/></svg>
<svg class="a" style="left:243.6px;top:516.3px" width="21.5" height="21.5" viewBox="0 0 22 22"><defs><clipPath id="avhunt"><circle cx="11" cy="11" r="11"/></clipPath></defs><g clip-path="url(#avhunt)"><linearGradient id="gavhunt" x1="0" y1="0" x2="1" y2="0"><stop offset="0" stop-color="#cfe6de"/><stop offset="1" stop-color="#86c0bc"/></linearGradient><rect width="22" height="22" fill="url(#gavhunt)"/><ellipse cx="10" cy="5.8" rx="2.5" ry="3.2" fill="#c89880"/><path d="M7.3 4.8 C7.3 1.2 12.7 1.2 12.7 4.8 C11.8 3.4 8.2 3.4 7.3 4.8 Z" fill="#1a1a1a"/><path d="M1.5 22 C1.5 13 4 9.2 10 9.2 C16 9.2 18.5 13 18.5 22 Z" fill="#1e2024"/><path d="M8.3 9.2 L11.8 9.2 L11.3 17 L8.8 17 Z" fill="#c8ccd0"/><path d="M9.6 10.5 L10.6 10.5 L10.9 16.5 L9.3 16.5 Z" fill="#3a5a8a"/><ellipse cx="10.5" cy="19.8" rx="2.8" ry="1.2" fill="#b88a72"/></g></svg>
<div class="t" style="left:275px;top:517.2px;font-size:11.7px;line-height:20px;color:#2fa5dc;-webkit-text-stroke:0.4px currentColor">Hunt_Duran</div>
<div class="t " style="left:410px;top:517.2px;font-size:12px;line-height:20px;color:#2b3137;">Hunt</div>
<div class="t " style="left:535px;top:517.2px;font-size:12px;line-height:20px;color:#2b3137;">Duran</div>
<div class="t " style="left:659.6px;top:517.2px;font-size:12px;line-height:20px;color:#2b3137;">noreply@youtestme.com</div>
<div class="t" style="left:852.2px;width:106px;text-align:center;top:517.2px;font-size:12px;line-height:20px;color:#2b3137;">Student</div>
<div class="t" style="left:962.8px;width:110px;text-align:center;top:517.2px;font-size:12px;line-height:20px;color:#22b33c;-webkit-text-stroke:0.3px currentColor;">Active</div>
<div class="t" style="left:1268px;top:517.2px;width:135px;overflow:hidden;font-size:11.75px;line-height:20px;color:#1f2429">Nov-05-2019 08:38 AM C..</div>
<div class="a" style="left:193px;top:546.4px;width:1210px;height:38.4px;background:#fff"></div>
<div class="a" style="left:193px;top:584.3px;width:1210px;height:1px;background:#edf1f5"></div>
<div class="cb cbu" style="left:202.6px;top:559.5px"></div>
<svg class="a" style="left:243.6px;top:554.7px" width="21.5" height="21.5" viewBox="0 0 22 22"><defs><clipPath id="avdefault"><circle cx="11" cy="11" r="11"/></clipPath></defs><g clip-path="url(#avdefault)"><rect width="22" height="22" fill="#6a6a6a"/><path d="M7 7.5 C6.8 3.5 8.5 2.2 11 2.2 C13.5 2.2 15.2 3.5 15 7.5 C14.8 10 13.5 11.5 12.5 12.5 L12.3 14 L9.7 14 L9.5 12.5 C8.5 11.5 7.2 10 7 7.5 Z" fill="#ececec"/><ellipse cx="11" cy="18.5" rx="9.5" ry="4.5" fill="#f2f2f2"/><rect x="6" y="20.8" width="10" height="1.2" fill="#9a9a9a"/></g></svg>
<div class="t" style="left:275px;top:555.6px;font-size:11.7px;line-height:20px;color:#2fa5dc;-webkit-text-stroke:0.4px currentColor">Ronan_Mitchell</div>
<div class="t " style="left:410px;top:555.6px;font-size:12px;line-height:20px;color:#2b3137;">Ronan</div>
<div class="t " style="left:535px;top:555.6px;font-size:12px;line-height:20px;color:#2b3137;">Mitchell</div>
<div class="t " style="left:659.6px;top:555.6px;font-size:12px;line-height:20px;color:#2b3137;">noreply@youtestme.com</div>
<div class="t" style="left:852.2px;width:106px;text-align:center;top:555.6px;font-size:12px;line-height:20px;color:#2b3137;">Student</div>
<div class="t" style="left:962.8px;width:110px;text-align:center;top:555.6px;font-size:12px;line-height:20px;color:#22b33c;-webkit-text-stroke:0.3px currentColor;">Active</div>
<div class="t" style="left:1268px;top:555.6px;width:135px;overflow:hidden;font-size:11.75px;line-height:20px;color:#1f2429">Nov-05-2019 08:38 AM C..</div>
<div class="a" style="left:226.0px;top:256px;width:1px;height:30.5px;background:#eef1f4"></div>
<div class="a" style="left:226.0px;top:286.5px;width:1px;height:298.5px;background:#e0e5eb"></div>
<div class="a" style="left:392.5px;top:256px;width:1px;height:30.5px;background:#eef1f4"></div>
<div class="a" style="left:392.5px;top:286.5px;width:1px;height:298.5px;background:#e0e5eb"></div>
<div class="a" style="left:517.5px;top:256px;width:1px;height:30.5px;background:#eef1f4"></div>
<div class="a" style="left:517.5px;top:286.5px;width:1px;height:298.5px;background:#e0e5eb"></div>
<div class="a" style="left:642.5px;top:256px;width:1px;height:30.5px;background:#eef1f4"></div>
<div class="a" style="left:642.5px;top:286.5px;width:1px;height:298.5px;background:#e0e5eb"></div>
<div class="a" style="left:850.5px;top:256px;width:1px;height:30.5px;background:#eef1f4"></div>
<div class="a" style="left:850.5px;top:286.5px;width:1px;height:298.5px;background:#e0e5eb"></div>
<div class="a" style="left:959.0px;top:256px;width:1px;height:30.5px;background:#eef1f4"></div>
<div class="a" style="left:959.0px;top:286.5px;width:1px;height:298.5px;background:#e0e5eb"></div>
<div class="a" style="left:1076.0px;top:256px;width:1px;height:30.5px;background:#eef1f4"></div>
<div class="a" style="left:1076.0px;top:286.5px;width:1px;height:298.5px;background:#e0e5eb"></div>
<div class="a" style="left:1251.0px;top:256px;width:1px;height:30.5px;background:#eef1f4"></div>
<div class="a" style="left:1251.0px;top:286.5px;width:1px;height:298.5px;background:#e0e5eb"></div>
<div class="a" style="left:193px;top:585px;width:1210px;height:1px;background:#e3e8ee"></div>
<div class="a" style="left:1402.5px;top:120.5px;width:7px;height:465px;background:#f4f7fb"></div>
<div class="a" style="left:1402.5px;top:120.5px;width:6.5px;height:391px;border-radius:3.5px;background:#2ea6df"></div>
<div class="a" style="left:703px;top:598px;width:90px;height:41px;background:#fff"></div>
<div class="t " style="left:725.6px;top:610.4px;font-size:13px;line-height:18px;color:#1f2429;-webkit-text-stroke:0.4px currentColor;">Confirm</div>
<div class="a" style="left:807.5px;top:599px;width:91.5px;height:39.5px;background:#f6f8fa;border:1px solid #dde2e8;border-radius:6px"></div>
<div class="t " style="left:834.2px;top:610.2px;font-size:12.3px;line-height:18px;color:#2b3137;">Cancel</div>
</div></div>
<svg class="a" style="left:1280px;top:131px" width="113" height="31"><rect x="2.4" y="2.6" width="107.4" height="25" fill="none" stroke="#e8413c" stroke-width="2.8"/></svg>
<div class="a" style="left:1248.2px;top:130.5px;width:30px;height:30px;border-radius:15px;background:#e24a4a;box-shadow:0 1.5px 2px rgba(0,0,0,0.35)"></div><div class="t" style="left:1248.2px;top:130.4px;width:30px;height:30px;line-height:30px;text-align:center;font-size:23px;color:#fff">1</div>
<svg class="a" style="left:190px;top:352px" width="40" height="197"><rect x="2.3" y="2.6" width="35" height="191.2" fill="none" stroke="#e8413c" stroke-width="2.6"/></svg>
<div class="a" style="left:157.3px;top:420px;width:30px;height:30px;border-radius:15px;background:#e24a4a;box-shadow:0 1.5px 2px rgba(0,0,0,0.35)"></div><div class="t" style="left:157.3px;top:419.9px;width:30px;height:30px;line-height:30px;text-align:center;font-size:23px;color:#fff">2</div>
<svg class="a" style="left:701px;top:595px" width="95" height="47"><rect x="2.2" y="2.9" width="89.5" height="41.4" fill="none" stroke="#e8413c" stroke-width="2.5"/></svg>
<div class="a" style="left:669px;top:603px;width:30px;height:30px;border-radius:15px;background:#e24a4a;box-shadow:0 1.5px 2px rgba(0,0,0,0.35)"></div><div class="t" style="left:669px;top:602.9px;width:30px;height:30px;line-height:30px;text-align:center;font-size:23px;color:#fff">3</div>
</div>
</body></html>
